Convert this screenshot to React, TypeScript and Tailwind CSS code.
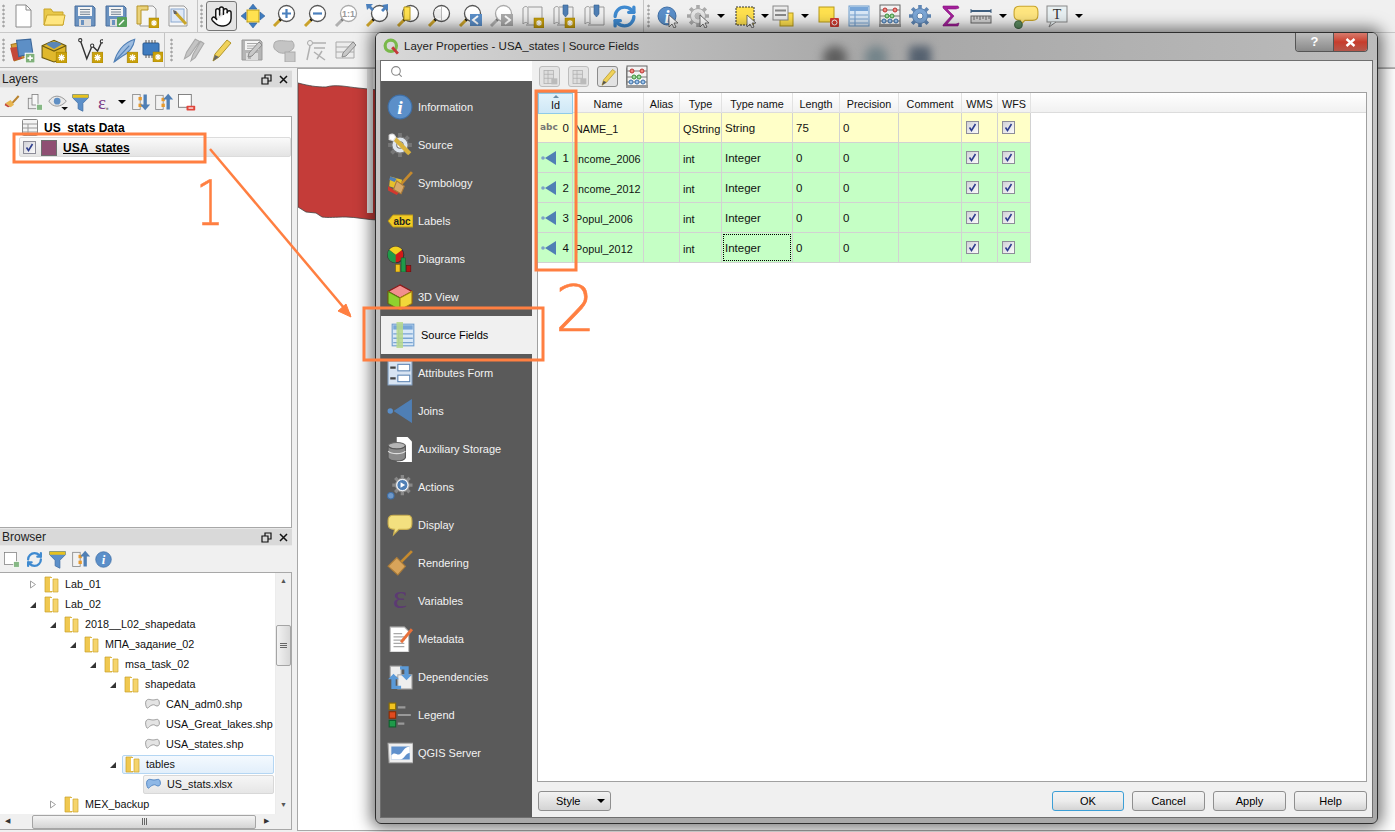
import React from "react";
import { Hand, RefreshCw, Search } from "lucide-react";

type P = { s?: number; children?: React.ReactNode };
const S = ({ s = 24, children }: P) => (
  <svg width={s} height={s} viewBox="0 0 24 24" fill="none" className="block shrink-0">{children}</svg>
);

const Gear = ({ x = 14, y = 14, s = 10 }: { x?: number; y?: number; s?: number }) => (
  <g>
    <rect x={x} y={y} width={s} height={s} fill="#c9a10c" stroke="#a07f00" strokeWidth=".5" />
    <path d={`M${x + s / 2} ${y + 2}v${s - 4}M${x + 2} ${y + s / 2}h${s - 4}M${x + 2.8} ${y + 2.8}l${s - 5.6} ${s - 5.6}M${x + s - 2.8} ${y + 2.8}l-${s - 5.6} ${s - 5.6}`} stroke="#fff" strokeWidth="1.2" />
  </g>
);

const Floppy = ({ gray }: { gray?: boolean }) => {
  const c = gray ? "#b5b5b5" : "#6a92c0";
  return (
    <g>
      <path d="M2 2h18l2 2v18H2z" fill={c} stroke={gray ? "#999" : "#4a6f9c"} />
      <rect x="5" y="3" width="14" height="9" fill="#f4f4f4" />
      <path d="M7 5.500h10M7 8h10M7 10.300h10" stroke={gray ? "#aaa" : "#6f7f90"} />
      <rect x="6" y="15" width="12" height="7" fill="#dcdcdc" />
      <rect x="8" y="16" width="3" height="5" fill={c} />
    </g>
  );
};

const Mag = ({ children, dim }: { children?: React.ReactNode; dim?: boolean }) => (
  <S>
    <path d="M9 15l-7 7" stroke={dim ? "#b0b0b0" : "#caa22a"} strokeWidth="3" />
    <path d="M9.500 14.500l-2 2" stroke={dim ? "#777" : "#111"} strokeWidth="2.500" />
    <circle cx="14.500" cy="9.500" r="8" fill="#fff" stroke={dim ? "#aaa" : "#555"} strokeWidth="1.300" />
    {children}
  </S>
);

const Scroll = ({ pin, badge }: { pin?: boolean; badge?: boolean }) => (
  <S>
    <path d="M3 4c2-2 4-2 5 0v16c-1-2-3-2-5 0zM8 3h14v18H6" fill="#efefef" stroke="#999" />
    {pin && <path d="M12 1h5v9l-2.500 3-2.500-3z" fill="#4f7fb5" stroke="#34608f" strokeWidth=".6" />}
    {badge && <Gear />}
  </S>
);

const Cursor = () => <path d="M14 11v12l3-3 2 4 2-1-2-4h4z" fill="#fff" stroke="#555" strokeWidth=".8" />;

const YellowBox = () => <rect x="3" y="3" width="15" height="15" fill="#ffe14f" stroke="#b89a18" />;

const Arrows4 = () => (
  <path d="M12 0l4 5h-8zM12 24l4-5h-8zM0 12l5-4v8zM24 12l-5-4v8z" fill="#3f7cc0" stroke="#2a5a92" strokeWidth=".5" />
);

const GrayPencil = () => <path d="M19 4l3 3-10 11-4 1 1-4z" fill="#c8c8c8" stroke="#8c8c8c" />;

const Layers = () => (
  <S s={26}>
    <path d="M2 7l9-2 3 14-9 3z" fill="#d7a13b" stroke="#a9781f" />
    <path d="M1 10l8-1 3 11-8 2z" fill="#c4483a" />
    <path d="M7 3l13 -1 2 13-13 3z" fill="#5d8fc6" stroke="#3c689b" />
    <rect x="15" y="15" width="9" height="9" fill="#7fb07a" stroke="#fff" />
    <path d="M19.500 17v5M17 19.500h5" stroke="#fff" strokeWidth="1.500" />
  </S>
);

const Table4 = () => (
  <g>
    <rect x="2" y="2" width="20" height="20" fill="#d9e8f7" stroke="#6d9ccc" />
    <rect x="3" y="3" width="18" height="4" fill="#78a6d8" />
    <path d="M3 11h18M3 15h18M3 19h18M8 7v15" stroke="#7aa4d2" strokeWidth="1.200" />
  </g>
);

const Abacus = () => (
  <S>
    <rect x="2" y="1" width="20" height="20" fill="#f2f2f2" stroke="#666" />
    <rect x="1" y="20" width="22" height="3" fill="#999" />
    <path d="M2 6h20M2 12h20M2 17h20" stroke="#777" />
    <g fill="#f08a80" stroke="#b33"><circle cx="7" cy="6" r="2" /><circle cx="17" cy="6" r="2" /></g>
    <g fill="#9fdc9f" stroke="#3a8f3a"><circle cx="9" cy="12" r="2" /><circle cx="14" cy="12" r="2" /></g>
    <g fill="#9fc4ea" stroke="#3a6fa8"><circle cx="6" cy="17" r="2" /><circle cx="12" cy="17" r="2" /><circle cx="18" cy="17" r="2" /></g>
  </S>
);

const Cog = ({ fill = "#7da7d6", stroke = "#5f86b4" }: { fill?: string; stroke?: string }) => (
  <g>
    <path d="M12 1v22M1 12h22M4.200 4.200l15.600 15.600M19.800 4.200L4.200 19.800" stroke={stroke} strokeWidth="3.600" />
    <circle cx="12" cy="12" r="7.500" fill={fill} stroke={stroke} />
    <circle cx="12" cy="12" r="3" fill="#fff" stroke={stroke} />
  </g>
);

const BlueI = ({ r = 11 }: { r?: number }) => (
  <g>
    <circle cx="12" cy="12" r={r} fill="#5b8fc9" stroke="#3f6fa6" />
    <text x="12" y="18.500" textAnchor="middle" fontSize="18" fontWeight="700" fontStyle="italic" fontFamily="Liberation Serif, serif" fill="#fff">i</text>
  </g>
);

const Balloon = ({ fill = "#ffe680", stroke = "#c9a52a" }: { fill?: string; stroke?: string }) => (
  <path d="M6 3h13c3 0 4 2 4 5v3c0 3-2 5-5 5h-7l-5 5 1-5c-4 0-6-2-6-5V8c0-3 2-5 5-5z" fill={fill} stroke={stroke} />
);

const Caret = () => <span className="block w-0 h-0 border-l-[4px] border-r-[4px] border-t-[4px] border-l-transparent border-r-transparent border-t-black" />;

const Grip = () => <span className="w-[3px] h-[24px] shrink-0 bg-[radial-gradient(#a5a5a5_1px,transparent_1.2px)] bg-[length:3px_4px]" />;
const Sep = () => <span className="w-px h-full bg-[#c4c4c4] shrink-0" />;

const B = ({ children, w = "w-[31px]" }: { children?: React.ReactNode; w?: string }) => (
  <span className={`${w} h-[26px] flex items-center justify-center shrink-0`}>{children}</span>
);

const Toolbar1 = () => (
  <div className="h-[33px] flex items-center border-b border-[#c9c9c9] shrink-0">
    <span className="w-[2px]" />
    <Grip />
    <span className="w-[2px]" />
    <B><S><path d="M5 1h10l5 5v17H5z" fill="#fff" stroke="#8a8a8a" /><path d="M15 1v5h5" stroke="#8a8a8a" /></S></B>
    <B><S><path d="M2 21V5h7l2 3h10v13z" fill="#e9c94a" stroke="#c9a52a" /><path d="M2 21l3-10h18l-2 10z" fill="#ffe680" stroke="#c9a52a" /></S></B>
    <B><S><Floppy /></S></B>
    <B><S><Floppy /><rect x="13" y="13" width="10" height="10" rx="1" fill="#57a05a" /><path d="M15 21l5-5" stroke="#fff" strokeWidth="1.500" /></S></B>
    <B><S><path d="M5 2h13l3 3v17H5z" fill="#f5f5f5" stroke="#999" /><path d="M2 2h11v4H6v14H2z" fill="#ead27a" stroke="#b8962a" /><Gear /></S></B>
    <B><S><path d="M3 2h15l3 3v17H3z" fill="#f7f7f7" stroke="#999" /><rect x="5" y="5" width="13" height="13" fill="#dfe9f7" stroke="#8aa8d0" /><path d="M9 8l11 12" stroke="#c9a52a" strokeWidth="3" /><path d="M7 6l3 1 1 3-3 0z" fill="#666" /></S></B>
    <span className="w-[4px]" />
    <Sep />
    <span className="w-[2px]" />
    <Grip />
    <span className="w-[3px]" />
    <span className="w-[31px] h-[30px] flex items-center justify-center rounded-[3px] border border-[#777] bg-[#e4e4e4] shrink-0">
      <Hand size={23} fill="#fff" stroke="#111" strokeWidth={1.500} />
    </span>
    <B><S><rect x="6" y="6" width="12" height="12" fill="#ffe14f" stroke="#b89a18" /><Arrows4 /></S></B>
    <B><Mag><path d="M14.500 5v9M10 9.500h9" stroke="#4b80bd" strokeWidth="2.200" /></Mag></B>
    <B><Mag><path d="M10 9.500h9" stroke="#4b80bd" strokeWidth="2.200" /></Mag></B>
    <B><Mag dim><text x="14.500" y="13" textAnchor="middle" fontSize="9" fontWeight="700" fill="#999" fontFamily="Liberation Sans, sans-serif">1:1</text></Mag></B>
    <B><Mag><path d="M1 0h7L6 2l3 3-2 2-3-3-2 2z" fill="#4b80bd" /><path d="M23 0v7l-2-2-3 3-2-2 3-3-2-2z" fill="#4b80bd" /></Mag></B>
    <B><Mag><path d="M8 3h6v13H8z" fill="#ffe14f" stroke="#b89a18" /></Mag></B>
    <B><Mag><path d="M14.500 2v15" stroke="#bbb" /><path d="M8 5h6v9H8z" fill="#eee" /></Mag></B>
    <B><Mag><rect x="12" y="10" width="12" height="12" fill="#5b8fc9" /><path d="M20 12l-5 4 5 4" stroke="#fff" strokeWidth="2" /></Mag></B>
    <B><Mag dim><rect x="12" y="10" width="12" height="12" fill="#aaa" /><path d="M16 12l5 4-5 4" stroke="#fff" strokeWidth="2" /></Mag></B>
    <B><Scroll badge /></B>
    <B><Scroll pin badge /></B>
    <B><Scroll pin /></B>
    <B><RefreshCw size={25} stroke="#3f8ad0" strokeWidth={3.200} /></B>
    <span className="w-[3px]" />
    <Sep />
    <span className="w-[3px]" />
    <Grip />
    <span className="w-[1px]" />
    <B w="w-[31px]"><S><BlueI r={9} /><Cursor /></S></B>
    <B><S><Cog fill="#e4e4e4" stroke="#aaa" /><circle cx="12" cy="12" r="3" fill="#bbb" /><Cursor /></S></B>
    <B w="w-[16px]"><Caret /></B>
    <B><S><rect x="3" y="3" width="18" height="18" fill="#ffe14f" stroke="#333" strokeDasharray="2 1" /><Cursor /></S></B>
    <B w="w-[9px]"><Caret /></B>
    <B w="w-[28px]"><S><rect x="9" y="9" width="13" height="13" fill="#ffe14f" stroke="#b89a18" /><rect x="2" y="2" width="15" height="14" fill="#ececec" stroke="#888" /><path d="M4 6.500h11M4 11h11" stroke="#888" strokeWidth="2" /></S></B>
    <B w="w-[16px]"><Caret /></B>
    <B w="w-[30px]"><S><YellowBox /><rect x="14" y="14" width="9" height="9" rx="1" fill="#d23b32" /><circle cx="18.500" cy="18.500" r="2.500" stroke="#fff" /></S></B>
    <B w="w-[31px]"><S><Table4 /></S></B>
    <B w="w-[31px]"><Abacus /></B>
    <B w="w-[30px]"><S><Cog /></S></B>
    <B w="w-[31px]"><S><path d="M20 4l-1-2H4v2l8 8-8 9v1h15l1-3-3 1H8l7-8-7-7h9z" fill="#a31f9a" stroke="#85157e" strokeWidth=".6" /></S></B>
    <B w="w-[29px]"><S><path d="M2 7h20" stroke="#3e5f7f" strokeWidth="2" /><path d="M2 5v4M22 5v4" stroke="#3e5f7f" /><rect x="2" y="12" width="20" height="7" fill="#d0d0d0" stroke="#666" /><path d="M5 12v4M8 12v3M11 12v4M14 12v3M17 12v4M20 12v3" stroke="#666" /></S></B>
    <B w="w-[16px]"><Caret /></B>
    <B w="w-[30px]"><S s={26}><Balloon /><circle cx="5" cy="20" r="3.500" fill="#5f8f64" stroke="#446b48" /></S></B>
    <B w="w-[31px]"><S><rect x="2" y="2" width="20" height="16" fill="#e8f0f2" stroke="#888" /><path d="M6 18l-2 5 7-5" fill="#e8f0f2" stroke="#888" /><text x="12" y="15" textAnchor="middle" fontSize="14" fontFamily="Liberation Serif, serif" fill="#333">T</text></S></B>
    <B w="w-[13px]"><Caret /></B>
  </div>
);

const Toolbar2 = () => (
  <div className="h-[35px] flex items-center shrink-0 border-b border-[#b9b9b9]">
    <span className="w-[2px]" />
    <Grip />
    <span className="w-[2px]" />
    <B w="w-[30px]"><Layers /></B>
    <B w="w-[33px]"><S s={26}><path d="M1 8l11-5 11 5v11l-11 4-11-4z" fill="#e0b82c" stroke="#6b5a10" /><path d="M1 8l11 5 11-5" stroke="#6b5a10" /><path d="M5 7a8 5 0 0 1 14 0l-7 4z" fill="#5a86b8" /><Gear /></S></B>
    <B w="w-[40px]"><S s={26}><path d="M3 3l6 17 5-12 5 5 4-9" stroke="#333" strokeWidth="1.300" /><g fill="#fff" stroke="#333"><circle cx="3" cy="3" r="1.500" /><circle cx="14" cy="8" r="1.500" /><circle cx="23" cy="4" r="1.500" /></g><Gear /></S></B>
    <B w="w-[30px]"><S s={26}><path d="M2 23c2-8 8-18 19-21-1 7-4 12-12 16z" fill="#9dbce0" stroke="#4f7fb5" /><path d="M2 23L16 8" stroke="#4f7fb5" /><Gear /></S></B>
    <B w="w-[22px]"><S><rect x="4" y="5" width="16" height="12" rx="1" fill="#3f7cc0" stroke="#2a5a92" /><path d="M7 2v3M10 2v3M13 2v3M16 2v3M7 17v3M10 17v3M13 17v3" stroke="#555" /><Gear /></S></B>
    <span className="w-[2px]" />
    <Sep />
    <span className="w-[5px]" />
    <Grip />
    <span className="w-[4px]" />
    <B w="w-[30px]"><S s={26}><path d="M5 20l2-6 8-12 4 2-9 13zM11 22l2-6 7-12 3 2-8 13z" fill="#c4c4c4" stroke="#a8a8a8" /></S></B>
    <B w="w-[28px]"><S><path d="M4 23l2-7L18 2l4 3-12 14z" fill="#f0d25a" stroke="#b3962a" /><path d="M4 23l2-6 4 2z" fill="#666" /></S></B>
    <B w="w-[33px]"><S><Floppy gray /><GrayPencil /></S></B>
    <B w="w-[32px]"><S><path d="M3 4c5-3 12 0 17-1 3 3 3 8-2 10-2 3-11 3-13 0C1 11 1 7 3 4z" fill="#c4c4c4" stroke="#aaa" /><rect x="13" y="14" width="10" height="10" fill="#c8c8c8" stroke="#aaa" /></S></B>
    <B w="w-[31px]"><S><circle cx="6" cy="5" r="2.500" stroke="#a8a8a8" /><path d="M6 8l-3 14M9 5h13M10 10h11M10 14l11 8M18 13l-5 8" stroke="#b0b0b0" strokeWidth="1.500" /></S></B>
    <B w="w-[30px]"><S><path d="M2 4h18v16H2zM2 9h18M2 14h18" fill="#ececec" stroke="#aaa" /><GrayPencil /></S></B>
  </div>
);

const Dock = ({ title }: { title: string }) => (
  <div className="h-[18px] bg-[#d9d9d9] border-y border-[#e8e8e8] flex items-center pl-[2px] pr-[4px] text-[12px] text-[#222] shrink-0">
    <span className="flex-1">{title}</span>
    <svg width="11" height="11" viewBox="0 0 11 11" className="mr-[7px]"><path d="M1 4h6v6H1zM4 4V1h6v6H7" fill="none" stroke="#111" strokeWidth="1.200" /></svg>
    <svg width="9" height="9" viewBox="0 0 9 9"><path d="M1 1l7 7M8 1L1 8" stroke="#111" strokeWidth="1.500" /></svg>
  </div>
);

const T = ({ children }: { children?: React.ReactNode }) => (
  <span className="w-[23px] h-[24px] flex items-center justify-center shrink-0">{children}</span>
);

const SmallUp = () => <svg width="20" height="20" viewBox="0 0 24 24"><rect x="2" y="4" width="9" height="17" fill="#f2f2f2" stroke="#888" /><rect x="9" y="7" width="4" height="4" fill="#e89a2c" /><rect x="9" y="14" width="4" height="4" fill="#e89a2c" /><path d="M17 2l6 7h-4v12h-4V9h-4z" fill="#4f7fb5" /></svg>;

const Check = () => (
  <svg width="13" height="13" viewBox="0 0 13 13" className="block">
    <defs><linearGradient id="ck" x1="0" y1="0" x2="1" y2="1"><stop offset="0" stopColor="#cfcfd6" /><stop offset="1" stopColor="#fdfdfd" /></linearGradient></defs>
    <rect x=".5" y=".5" width="12" height="12" fill="url(#ck)" stroke="#8d8d99" />
    <path d="M3.500 6.500l2 3 4-6.500" fill="none" stroke="#2f3f8f" strokeWidth="1.600" />
  </svg>
);

const LayersPanel = () => (
  <div className="h-[458px] flex flex-col shrink-0">
    <Dock title="Layers" />
    <div className="h-[28px] flex items-center shrink-0">
      <T><svg width="16" height="16" viewBox="0 0 24 24"><path d="M12 14L22 3" stroke="#b88330" strokeWidth="3" /><path d="M2 14l8-5 5 7-5 4z" fill="#e8b54f" /><path d="M2 14l7 5-3 1-5-3z" fill="#c4483a" /></svg></T>
      <T><svg width="18" height="18" viewBox="0 0 24 24"><rect x="3" y="7" width="12" height="14" fill="#eee" stroke="#777" /><rect x="8" y="2" width="8" height="14" fill="#f8f8f8" stroke="#777" /><rect x="14" y="15" width="8" height="8" fill="#86b885" stroke="#fff" /></svg></T>
      <T><svg width="20" height="20" viewBox="0 0 24 24"><path d="M1 11c5-8 14-8 21 0-7 8-16 8-21 0z" fill="#e8e8e8" stroke="#888" /><circle cx="11" cy="11" r="4" fill="#5f8fc4" /><path d="M16 18h8l-4 4z" fill="#111" /></svg></T>
      <T><svg width="19" height="19" viewBox="0 0 24 24"><path d="M2 2h20v4l-7 7v10l-6-3v-7L2 6z" fill="#5b8fc9" stroke="#3f6fa6" /><rect x="2" y="2" width="20" height="4" fill="#e6c11e" /></svg></T>
      <T><span className="text-[19px] leading-none text-[#7b3a87] [font-family:'Liberation_Serif',serif]">ε<sub className="text-[8px] text-[#888]">▪</sub></span></T>
      <span className="w-[14px] flex justify-center shrink-0"><Caret /></span>
      <T><svg width="20" height="20" viewBox="0 0 24 24"><rect x="2" y="3" width="9" height="18" fill="#f2f2f2" stroke="#888" /><rect x="9" y="6" width="4" height="4" fill="#e89a2c" /><rect x="9" y="14" width="4" height="4" fill="#e89a2c" /><path d="M17 22l6-7h-4V3h-4v12h-4z" fill="#4f7fb5" /></svg></T>
      <T><SmallUp /></T>
      <T><svg width="19" height="19" viewBox="0 0 24 24"><rect x="2" y="2" width="16" height="16" fill="#fff" stroke="#666" /><rect x="12" y="16" width="11" height="6" rx="1" fill="#e0463c" /><path d="M14.500 19h6" stroke="#fff" strokeWidth="1.500" /></svg></T>
    </div>
    <div className="flex-1 bg-white border-y border-r border-[#a8a8a8] text-[12px] text-black">
      <div className="h-[20px] pl-[22px] pt-[1px] flex items-center gap-[6px] font-bold">
        <svg width="16" height="17" viewBox="0 0 16 17"><rect x=".5" y=".5" width="15" height="16" rx="1" fill="#f4f4f4" stroke="#888" /><path d="M1 5h14M1 9h14M1 13h14M6 5v12" stroke="#9a9a9a" /></svg>
        <span>US_stats Data</span>
      </div>
      <div className="ml-[19px] h-[20px] pt-[1px] rounded-[2px] border border-[#dcdcdc] bg-gradient-to-b from-[#fafafa] to-[#e4e4e4] flex items-center pl-[3px]">
        <Check />
        <span className="w-[16px] h-[16px] bg-[#8f4f73] border border-[#6f6f6f] ml-[5px]" />
        <span className="ml-[6px] font-bold underline">USA_states</span>
      </div>
    </div>
  </div>
);

const Folder = () => (
  <svg width="15" height="17" viewBox="0 0 15 17" className="block shrink-0">
    <path d="M1 1h6l1 1v14H1z" fill="#f0c850" stroke="#c9a02a" strokeWidth=".7" />
    <path d="M6 2h4v13H6z" fill="#fff" />
    <path d="M9 3h5v13H9z" fill="#f5d46c" stroke="#cfa830" strokeWidth=".7" />
  </svg>
);
const Shape = ({ blue }: { blue?: boolean }) => (
  <svg width="15" height="13" viewBox="0 0 15 13" className="block shrink-0">
    <path d="M1 3c2-3 4-1 7-1s5-2 6 1 0 5-2 5-2-2-5-1-4 4-5 3-2-5-1-7z" fill={blue ? "#8fb8e6" : "#e4e4e4"} stroke={blue ? "#5a8cc6" : "#a0a0a0"} />
  </svg>
);

type Row = { t: string; d: number; k: "open" | "closed" | "file"; sel?: "a" | "b" };
const tree: Row[] = [
  { t: "Lab_01", d: 0, k: "closed" },
  { t: "Lab_02", d: 0, k: "open" },
  { t: "2018__L02_shapedata", d: 1, k: "open" },
  { t: "МПА_задание_02", d: 2, k: "open" },
  { t: "msa_task_02", d: 3, k: "open" },
  { t: "shapedata", d: 4, k: "open" },
  { t: "CAN_adm0.shp", d: 5, k: "file" },
  { t: "USA_Great_lakes.shp", d: 5, k: "file" },
  { t: "USA_states.shp", d: 5, k: "file" },
  { t: "tables", d: 4, k: "open", sel: "a" },
  { t: "US_stats.xlsx", d: 5, k: "file", sel: "b" },
  { t: "MEX_backup", d: 1, k: "closed" },
];

const TreeRow = ({ r }: { r: Row }) => {
  const left = 29 + r.d * 20;
  return (
    <div className="h-[20px] flex items-center" style={{ paddingLeft: left }}>
      {r.k === "file" ? (
        <span className="w-[14px] shrink-0" />
      ) : (
        <svg width="8" height="9" viewBox="0 0 8 9" className="shrink-0">
          {r.k === "open" ? <path d="M1 8h6V2z" fill="#333" /> : <path d="M1.500 1l5 3.500-5 3.500z" fill="#fff" stroke="#a0a0a0" />}
        </svg>
      )}
      <span className={`flex items-center h-[19px] flex-1 mr-[1px] rounded-[2px] ${r.sel === "a" ? "border border-[#b4d6f3] bg-gradient-to-b from-[#f4f9fe] to-[#e2effb]" : r.sel === "b" ? "border border-[#d8d8d8] bg-gradient-to-b from-[#f6f6f6] to-[#e6e6e6]" : ""} ${r.k === "file" ? "pl-[2px]" : "ml-[5px] pl-[2px]"}`}>
        {r.k === "file" ? <Shape blue={r.sel === "b"} /> : <Folder />}
        <span className="ml-[6px] whitespace-nowrap">{r.t}</span>
      </span>
    </div>
  );
};

const BrowserPanel = () => (
  <div className="flex-1 flex flex-col">
    <Dock title="Browser" />
    <div className="h-[26px] flex items-center shrink-0">
      <T><svg width="17" height="17" viewBox="0 0 24 24"><rect x="2" y="2" width="17" height="17" fill="#fff" stroke="#777" /><rect x="15" y="15" width="8" height="8" fill="#86b885" stroke="#fff" /></svg></T>
      <T><RefreshCw size={17} stroke="#3f8ad0" strokeWidth={3.200} /></T>
      <T><svg width="19" height="19" viewBox="0 0 24 24"><path d="M2 2h20v4l-7 7v10l-6-3v-7L2 6z" fill="#5b8fc9" stroke="#3f6fa6" /><rect x="2" y="2" width="20" height="4" fill="#e6c11e" /></svg></T>
      <T><SmallUp /></T>
      <T><svg width="17" height="17" viewBox="0 0 24 24"><BlueI /></svg></T>
    </div>
    <div className="flex-1 bg-white border border-l-0 border-[#a8a8a8] flex flex-col text-[10.8px] text-[#111]">
      <div className="flex-1 flex min-h-0">
        <div className="flex-1 min-w-0 overflow-hidden pt-[1px]">
          {tree.map((r) => <TreeRow key={r.t} r={r} />)}
        </div>
        <div className="w-[16px] bg-[#f0f0f0] flex flex-col items-center text-[#555] text-[7px] border-l border-[#ececec]">
          <span className="h-[17px] flex items-center">▲</span>
          <span className="mt-[35px] w-[15px] h-[41px] rounded-[2px] border border-[#a5a5a5] bg-gradient-to-r from-[#f2f2f2] to-[#d8d8d8] flex flex-col items-center justify-center gap-px"><i className="w-[7px] h-px bg-[#666]" /><i className="w-[7px] h-px bg-[#666]" /><i className="w-[7px] h-px bg-[#666]" /></span>
          <span className="mt-auto h-[17px] flex items-center">▼</span>
        </div>
      </div>
      <div className="h-[15px] bg-[#f0f0f0] flex items-center shrink-0 text-[7px] text-[#333]">
        <span className="w-[32px] pl-[5px]">◀</span>
        <span className="w-[224px] h-[14px] rounded-[2px] border border-[#a5a5a5] bg-gradient-to-b from-[#f4f4f4] to-[#d4d4d4] flex items-center justify-center gap-px"><i className="w-px h-[7px] bg-[#666]" /><i className="w-px h-[7px] bg-[#666]" /><i className="w-px h-[7px] bg-[#666]" /></span>
        <span className="pl-[8px]">▶</span>
      </div>
    </div>
  </div>
);

const Canvas = () => (
  <div className="flex-1 min-w-0 ml-[5px] mb-px bg-white border border-r-0 border-[#a8a8a8] overflow-hidden">
    <svg width="90" height="160" viewBox="0 0 90 160" className="block">
      <path d="M0 14c12 3 18 4 28 4 10-3 22 0 32 1l20 2v130c-10 0-22-3-32-3-10 0-18 1-24 0l-6-4-10-1-8-5z" fill="#c43c39" stroke="#444" strokeWidth=".8" />
      <rect x="69" y="0" width="6" height="144" fill="#e6e6e6" />
    </svg>
  </div>
);

const navIcons: Record<string, React.ReactNode> = {
  Information: <S s={26}><BlueI /></S>,
  Source: (
    <S s={26}><Cog fill="#dfe6ee" stroke="#777" /><path d="M6 5l15 15" stroke="#d9b23c" strokeWidth="4" /><path d="M2 3c3-2 5-1 6 2l-2 3-4-1z" fill="#fff" stroke="#ddd" /></S>
  ),
  Symbology: (
    <S s={26}><path d="M13 13L23 2" stroke="#c58a2e" strokeWidth="2.500" /><path d="M3 6l11 3-3 9-9-3z" fill="#e6c12c" /><path d="M1 15l10 6-2 2-8-4z" fill="#d2392f" /><path d="M3 6l6 2-2 3-5-2z" fill="#4f7fb5" /><path d="M9 10l7 5-3 7-7-4z" fill="#d8a96a" stroke="#a97b3a" /></S>
  ),
  Labels: (
    <svg width="26" height="26" viewBox="0 0 26 26" className="block shrink-0"><path d="M1 13l5-6h20v12H6z" fill="#f2cb24" stroke="#b8961a" /><text x="15" y="17" textAnchor="middle" fontSize="10" fontWeight="700" fontFamily="Liberation Sans, sans-serif" fill="#222">abc</text></svg>
  ),
  Diagrams: (
    <S s={26}><circle cx="8" cy="8" r="7.500" fill="#d11a1a" stroke="#333" /><path d="M8 8L2 3.500A7.500 7.500 0 0 1 14 3.500z" fill="#f2d21f" /><path d="M8 8v7.500A7.500 7.500 0 0 1 .5 8C.5 6 1 5 2 3.500z" fill="#1f9a4a" /><rect x="8" y="17" width="4" height="7" fill="#f2c21f" stroke="#7a6200" strokeWidth=".5" /><rect x="13" y="11" width="4" height="13" fill="#1f9a4a" stroke="#125f2c" strokeWidth=".5" /><rect x="18" y="18" width="4" height="6" fill="#b01414" stroke="#5f0a0a" strokeWidth=".5" /></S>
  ),
  "3D View": (
    <S s={26}><path d="M12 1l11 6v11l-11 6-11-6V7z" fill="#eee" stroke="#8a1a1a" /><path d="M12 1l11 6-11 6L1 7z" fill="#f28f8f" stroke="#8a1a1a" /><path d="M1 7l11 6v11L1 18z" fill="#8fd12e" stroke="#5d7f14" /><path d="M23 7l-11 6v11l11-6z" fill="#f2d83a" stroke="#a08a10" /></S>
  ),
  "Source Fields": (
    <S s={26}><Table4 /><rect x="6" y="0" width="6" height="24" fill="#b7d98a" opacity=".85" /></S>
  ),
  "Attributes Form": (
    <S s={26}><rect x="1" y="1" width="22" height="22" fill="#d8e4f2" stroke="#8aa7c8" /><rect x="10" y="4" width="11" height="6" fill="#fff" stroke="#5f86b4" /><rect x="10" y="14" width="11" height="6" fill="#fff" stroke="#5f86b4" /><path d="M3 7h5M3 17h5" stroke="#444" strokeWidth="2" /></S>
  ),
  Joins: (
    <S s={26}><circle cx="3" cy="12" r="2.500" fill="#5b8fc9" /><path d="M6 12L23 1v22z" fill="#4f7fb5" /></S>
  ),
  "Auxiliary Storage": (
    <S s={26}><path d="M9 1h10l4 4v19H9z" fill="#fff" /><ellipse cx="9" cy="9" rx="8" ry="3" fill="#b5b5b5" stroke="#666" /><path d="M1 9v11c2 4 14 4 16 0V9c-2 4-14 4-16 0z" fill="#8a8a8a" stroke="#555" /><path d="M1 14c3 3 13 3 16 0" stroke="#ddd" /></S>
  ),
  Actions: (
    <S s={26}><g transform="translate(4 0) scale(.85)"><Cog fill="#cfcfcf" stroke="#888" /><circle cx="12" cy="12" r="6" fill="#4f7fb5" stroke="#fff" /><path d="M10 9l5 3-5 3z" fill="#fff" /></g><circle cx="3.500" cy="20" r="3" fill="#6f98c8" stroke="#3f6fa6" /></S>
  ),
  Display: <S s={26}><Balloon fill="#f3e07f" stroke="#c9ae50" /></S>,
  Rendering: (
    <S s={26}><path d="M11 13L23 1" stroke="#c58a2e" strokeWidth="2.500" /><path d="M1 15l8-8 8 8-7 8z" fill="#d8a45a" stroke="#a97b3a" /></S>
  ),
  Variables: (
    <span className="w-[26px] h-[26px] shrink-0 flex items-center justify-center pb-[8px] text-[34px] leading-none text-[#5c3a72] [font-family:'Liberation_Serif',serif]">ε</span>
  ),
  Metadata: (
    <S s={26}><path d="M3 1h13l4 4v19H3z" fill="#fff" stroke="#bbb" /><path d="M6 7h8M6 10h10M6 13h10M6 16h10M6 19h10" stroke="#a8a8a8" /><path d="M12 14l10-12 2 2-10 12z" fill="#e8703a" /></S>
  ),
  Dependencies: (
    <S s={26}><rect x="3" y="2" width="10" height="10" fill="#eee" stroke="#aaa" /><rect x="10" y="10" width="13" height="13" fill="#eee" stroke="#aaa" /><path d="M1 14l5-5 5 5H8v6h5v3H4v-9z" fill="#5b9ad8" /><path d="M23 10l-5 5-5-5h3V5h-4V2h8v8z" fill="#5b9ad8" /></S>
  ),
  Legend: (
    <S s={26}><rect x="2" y="1" width="6" height="6" fill="#f2c21f" stroke="#8a6d00" /><rect x="2" y="9" width="6" height="6" fill="#e04a1f" stroke="#8a2a00" /><rect x="2" y="17" width="6" height="6" fill="#1f9a4a" stroke="#0f5f2c" /><path d="M10 5h7M10 12h12M10 20h6" stroke="#999" strokeWidth="2" /></S>
  ),
  "QGIS Server": (
    <S s={26}><path d="M1 3h23v18H2z" fill="#eee" stroke="#aaa" /><path d="M4 6h17v12H4z" fill="#5f90cc" /><path d="M4 14c4-4 5 1 8-1s3-6 9-7v6c-4 0-5 6-9 6H4z" fill="#fff" /></S>
  ),
};

const nav = ["Information", "Source", "Symbology", "Labels", "Diagrams", "3D View", "Source Fields", "Attributes Form", "Joins", "Auxiliary Storage", "Actions", "Display", "Rendering", "Variables", "Metadata", "Dependencies", "Legend", "QGIS Server"];

const Sidebar = () => (
  <div className="w-[151px] shrink-0 flex flex-col bg-[#5a5a5a] text-[11px]">
    <div className="h-[20px] bg-white flex items-center pl-[9px] shrink-0">
      <Search size={13} stroke="#888" />
    </div>
    <div className="pt-[7px]">
      {nav.map((n) =>
        n === "Source Fields" ? (
          <div key={n} className="h-[38px] bg-[#f0f0f0] text-black flex items-center pl-[9px] gap-[5px]">
            {navIcons[n]}<span>{n}</span>
          </div>
        ) : (
          <div key={n} className="h-[38px] text-[#f2f2f2] flex items-center pl-[6px] gap-[5px]">
            {navIcons[n]}<span>{n}</span>
          </div>
        )
      )}
    </div>
  </div>
);

const cols = "grid grid-cols-[35px_71px_36px_42px_71px_47px_59px_63px_36px_33px]";
const heads = ["Name", "Alias", "Type", "Type name", "Length", "Precision", "Comment", "WMS", "WFS"];
const fields = [
  { n: "NAME_1", t: "QString", tn: "String", l: "75", str: true },
  { n: "Income_2006", t: "int", tn: "Integer", l: "0" },
  { n: "Income_2012", t: "int", tn: "Integer", l: "0" },
  { n: "Popul_2006", t: "int", tn: "Integer", l: "0" },
  { n: "Popul_2012", t: "int", tn: "Integer", l: "0", focus: true },
];
const cell = "border-r border-b border-[#d2d2d2] flex items-center pl-[3px] pt-[3px] whitespace-nowrap";
const nameCell = "border-r border-b border-[#d2d2d2] flex items-center pl-[2px] pt-[3px] whitespace-nowrap text-[10.8px]";
const boxCell = "border-r border-b border-[#d2d2d2] flex items-center pl-[4px]";

const FieldTable = () => (
  <div className="flex-1 ml-[4px] mr-[5px] bg-white border border-[#a0a0a0] text-[11.5px] text-[#111] min-h-0">
    <div className="h-[20px] bg-gradient-to-b from-[#ffffff] to-[#f1f1f1] border-b border-[#dcdcdc] text-[10.8px]">
      <div className={`${cols} w-[493px] h-[19px]`}>
        <div className="relative border border-[#8fcbe9] bg-gradient-to-b from-[#e3f3fb] to-[#cfe8f6] flex items-center justify-center pt-[3px]">
          <span className="absolute top-[1px] w-0 h-0 border-l-[3px] border-r-[3px] border-b-[3px] border-l-transparent border-r-transparent border-b-[#6b8fa8]" />
          Id
        </div>
        {heads.map((h) => (
          <div key={h} className="border-r border-[#e2e2e2] flex items-center justify-center">{h}</div>
        ))}
      </div>
    </div>
    {fields.map((f, i) => (
      <div key={f.n} className={`${cols} w-[493px] h-[30px] ${f.str ? "bg-[#ffffc8]" : "bg-[#c5ffc5]"}`}>
        <div className="border-r border-b border-[#d2d2d2] flex items-center justify-between pl-[2px] pr-[3px]">
          {f.str ? (
            <span className="text-[9px] font-bold text-[#777] [font-family:'DejaVu_Sans',sans-serif] leading-none">abc</span>
          ) : (
            <svg width="17" height="16" viewBox="0 0 17 16"><circle cx="3" cy="8" r="1.800" fill="#7da2c8" /><path d="M5 8l11-7v14z" fill="#4f7fb5" /></svg>
          )}
          <span className="pt-[3px]">{i}</span>
        </div>
        <div className={nameCell}>{f.n}</div>
        <div className={cell} />
        <div className={`${cell} text-[11px]`}>{f.t}</div>
        {f.focus ? (
          <div className="border-r border-b border-[#d2d2d2] p-px">
            <span className="w-full h-full pl-[1px] pt-[3px] flex items-center border border-dotted border-black">{f.tn}</span>
          </div>
        ) : (
          <div className={cell}>{f.tn}</div>
        )}
        <div className={cell}>{f.l}</div>
        <div className={cell}>0</div>
        <div className={cell} />
        <div className={boxCell}><Check /></div>
        <div className={boxCell}><Check /></div>
      </div>
    ))}
  </div>
);

const Btn = ({ children, w, primary }: { children: string; w: string; primary?: boolean }) => (
  <span className={`${w} h-[20px] rounded-[3px] border ${primary ? "border-[#3c9fd6]" : "border-[#8f8f8f]"} bg-gradient-to-b from-[#f3f3f3] via-[#ececec] to-[#d4d4d4] flex items-center justify-center text-[11px] text-black shrink-0`}>{children}</span>
);

const IconBtn = ({ children, dim }: { children?: React.ReactNode; dim?: boolean }) => (
  <span className={`w-[21px] h-[21px] rounded-[3px] border ${dim ? "border-[#bdbdbd] bg-[#e4e4e4]" : "border-[#8c8c8c] bg-[#e2e2e2]"} flex items-center justify-center shrink-0`}>{children}</span>
);

const Main = () => (
  <div className="flex-1 min-w-0 bg-[#f0f0f0] flex flex-col">
    <div className="h-[31px] flex items-center pl-[6px] gap-[8px] shrink-0">
      <IconBtn dim><S s={16}><rect x="3" y="2" width="14" height="20" fill="#ddd" stroke="#aaa" /><path d="M3 8h14M3 14h14M9 2v20" stroke="#aaa" /><rect x="14" y="14" width="9" height="9" fill="#bbb" /></S></IconBtn>
      <IconBtn dim><S s={16}><rect x="3" y="2" width="14" height="20" fill="#ddd" stroke="#aaa" /><path d="M3 8h14M3 14h14M9 2v20" stroke="#aaa" /><rect x="14" y="14" width="9" height="9" fill="#bbb" /></S></IconBtn>
      <IconBtn><S s={18}><path d="M4 23l2-7L18 2l4 3-12 14z" fill="#f0d25a" stroke="#b3962a" /><path d="M4 23l2-6 4 2z" fill="#555" /></S></IconBtn>
      <IconBtn><Abacus /></IconBtn>
    </div>
    <FieldTable />
    <div className="h-[35px] flex items-center pl-[5px] pr-[5px] pt-[3px] shrink-0">
      <span className="w-[73px] h-[20px] rounded-[3px] border border-[#8f8f8f] bg-gradient-to-b from-[#f3f3f3] to-[#d4d4d4] flex items-center text-[11px] text-black pl-[17px] gap-[17px] shrink-0">Style <Caret /></span>
      <span className="flex-1" />
      <span className="flex gap-[8px]">
        <Btn w="w-[72px]" primary>OK</Btn>
        <Btn w="w-[73px]">Cancel</Btn>
        <Btn w="w-[73px]">Apply</Btn>
        <Btn w="w-[73px]">Help</Btn>
      </span>
    </div>
  </div>
);

const Dialog = () => (
  <div className="absolute left-[375px] top-[32px] w-[1003px] h-[792px] rounded-[6px] border border-[#2e2e2e] shadow-[0_0_16px_4px_rgba(0,0,0,0.55)] overflow-hidden flex flex-col bg-gradient-to-b from-[#c9c9c9] via-[#bdbdbd] to-[#a9a9a9]">
    <div className="h-[27px] relative shrink-0 bg-gradient-to-r from-[#d9d9d9] via-[#a6a6a6] to-[#bcbcbc] flex items-center pl-[7px] overflow-hidden">
      <span className="absolute left-[447px] top-[13px] w-[24px] h-[24px] bg-[#5f5f5f] blur-[5px] rounded-full" />
      <span className="absolute left-[489px] top-[13px] w-[22px] h-[24px] bg-[#74848a] blur-[5px] rounded-full" />
      <span className="absolute left-[533px] top-[13px] w-[22px] h-[24px] bg-[#566270] blur-[4px] rounded-sm" />
      <svg width="17" height="17" viewBox="0 0 24 24" className="relative"><circle cx="11" cy="11" r="8" fill="none" stroke="#79b84a" strokeWidth="4.500" /><path d="M13 13l8 9" stroke="#c4383a" strokeWidth="4" /></svg>
      <span className="relative ml-[4px] text-[11.5px] text-[#1c1c1c]">Layer Properties - USA_states | Source Fields</span>
      <span className="absolute right-[9px] top-0 flex h-[19px] border border-t-0 border-[#555] rounded-b-[4px] overflow-hidden">
        <span className="w-[38px] bg-gradient-to-b from-[#bdbdbd] to-[#8a8a8a] border-r border-[#555] flex items-center justify-center text-white font-bold text-[13px]">?</span>
        <span className="w-[33px] bg-gradient-to-b from-[#d77a6c] via-[#c73c2c] to-[#b5564a] flex items-center justify-center"><svg width="11" height="9" viewBox="0 0 11 9"><path d="M1.500 1l8 7M9.500 1l-8 7" stroke="#fff" strokeWidth="2.400" /></svg></span>
      </span>
    </div>
    <div className="flex-1 min-h-0 flex mx-[4px] mb-[5px] border border-[#6f6f6f]">
      <Sidebar />
      <span className="w-px bg-[#f0f0f0] shrink-0" />
      <Main />
    </div>
  </div>
);

const Annotations = () => (
  <>
    <svg width="1395" height="832" viewBox="0 0 1395 832" fill="none" className="absolute left-0 top-0 pointer-events-none">
      <rect x="14" y="134" width="191" height="28" stroke="#ff7f41" strokeWidth="3" />
      <rect x="536" y="91" width="40" height="179" stroke="#ff7f41" strokeWidth="3" />
      <rect x="364" y="308" width="179" height="52" stroke="#ff7f41" strokeWidth="3" />
      <path d="M210 149L350 315" stroke="#ff7f41" strokeWidth="2.500" />
      <path d="M351 317l-13-6 8-7z" fill="#ff7f41" stroke="#ff7f41" />
    </svg>
    <span className="absolute left-[190px] top-[170px] scale-x-[0.7] text-[#ff7f41] text-[62px] leading-[68px] font-extralight [font-family:'DejaVu_Sans',sans-serif] [-webkit-text-stroke:0.6px_#ff7f41]">1</span>
    <span className="absolute left-[555px] top-[275px] text-[#ff7f41] text-[64px] leading-[68px] font-extralight [font-family:'DejaVu_Sans',sans-serif] [-webkit-text-stroke:0.6px_#ff7f41]">2</span>
  </>
);

export default function App() {
  return (
    <div className="relative w-[1395px] h-[832px] overflow-hidden bg-[#f0f0f0] text-[12px] [font-family:'Liberation_Sans',sans-serif]">
      <div className="h-full flex flex-col">
        <Toolbar1 />
        <Toolbar2 />
        <div className="flex-1 min-h-0 flex">
          <div className="w-[292px] shrink-0 flex flex-col pt-[2px] pb-[2px]">
            <LayersPanel />
            <BrowserPanel />
          </div>
          <Canvas />
        </div>
      </div>
      <Dialog />
      <Annotations />
    </div>
  );
}
